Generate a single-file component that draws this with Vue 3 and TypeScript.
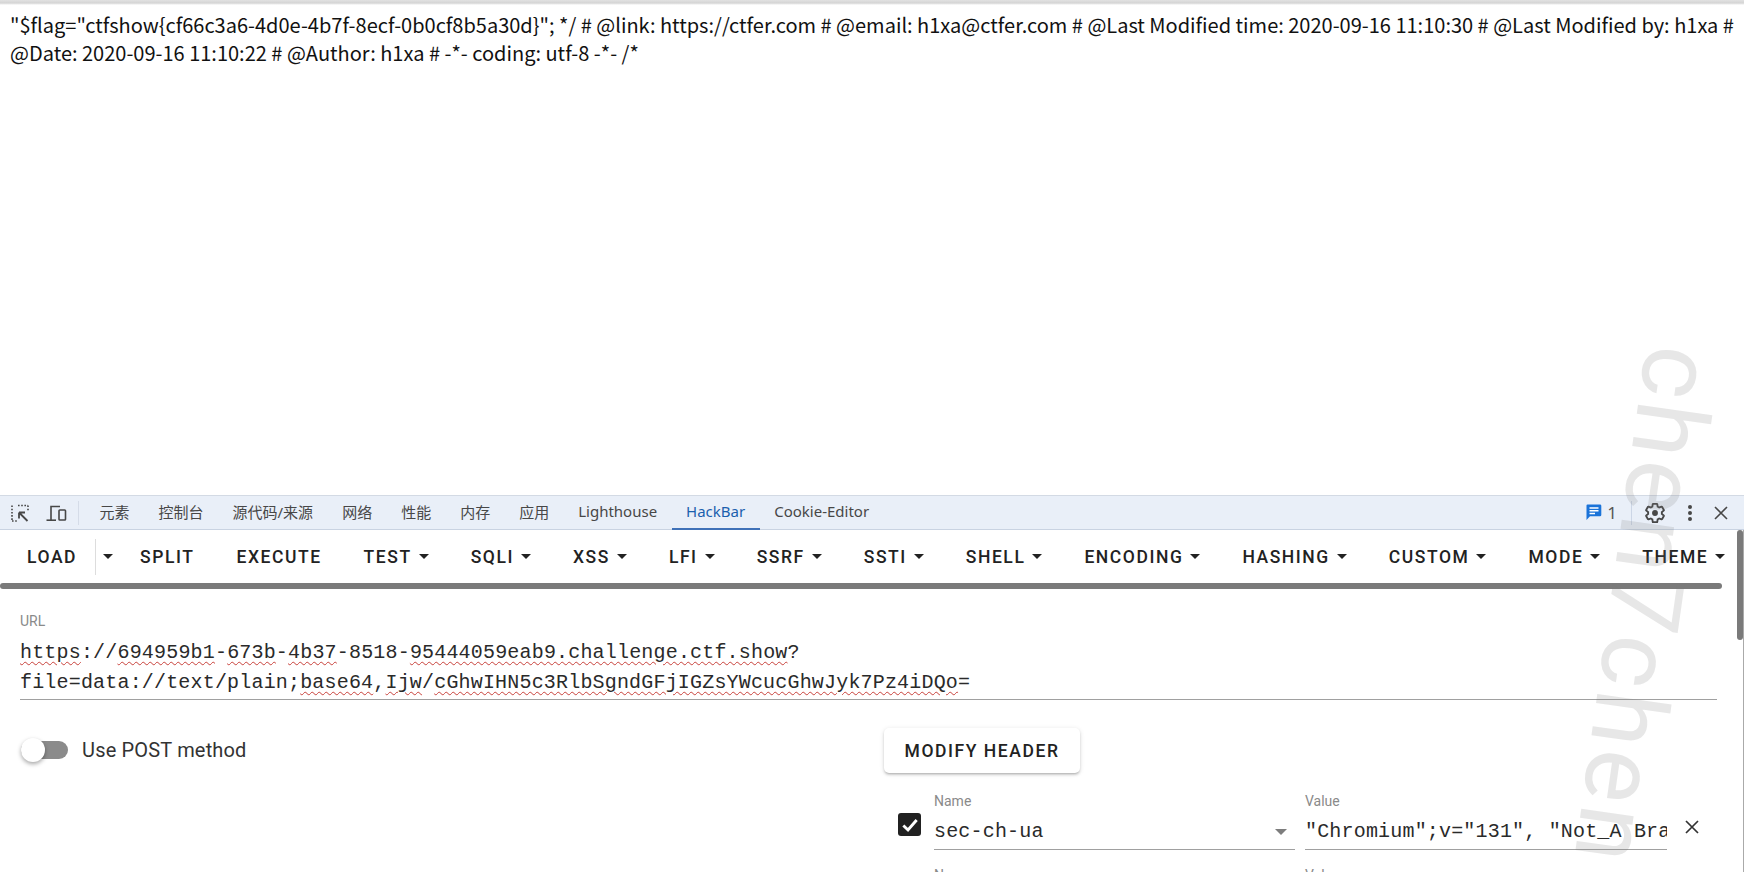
<script setup lang="ts">
interface Seg { t: string; bad?: boolean }
const tabs: string[] = ['元素', '控制台', '源代码/来源', '网络', '性能', '内存', '应用', 'Lighthouse', 'HackBar', 'Cookie-Editor']
const tools: { label: string; caret: boolean }[] = [
  { label: 'SPLIT', caret: false }, { label: 'EXECUTE', caret: false }, { label: 'TEST', caret: true },
  { label: 'SQLI', caret: true }, { label: 'XSS', caret: true }, { label: 'LFI', caret: true },
  { label: 'SSRF', caret: true }, { label: 'SSTI', caret: true }, { label: 'SHELL', caret: true },
  { label: 'ENCODING', caret: true }, { label: 'HASHING', caret: true }, { label: 'CUSTOM', caret: true },
  { label: 'MODE', caret: true }, { label: 'THEME', caret: true },
]
const line1: Seg[] = [
  { t: 'https', bad: true }, { t: '://' }, { t: '694959b1', bad: true }, { t: '-' }, { t: '673b', bad: true }, { t: '-' },
  { t: '4b37', bad: true }, { t: '-8518-' }, { t: '95444059eab9.challenge.ctf.show', bad: true }, { t: '?' },
]
const line2: Seg[] = [
  { t: 'file=data://text/plain;' }, { t: 'base64', bad: true }, { t: ',' }, { t: 'Ijw', bad: true }, { t: '/' },
  { t: 'cGhwIHN5c3RlbSgndGFjIGZsYWcucGhwJyk7Pz4iDQo', bad: true }, { t: '=' },
]
const value = '"Chromium";v="131", "Not_A Brand";v="24"'
</script>

<template>
  <div class="page">
    <div class="doc">
      "$flag="ctfshow{cf66c3a6-4d0e-4b7f-8ecf-0b0cf8b5a30d}"; */ # @link: https://ctfer.com # @email: h1xa@ctfer.com # @Last Modified time: 2020-09-16 11:10:30 # @Last Modified by: h1xa # @Date: 2020-09-16 11:10:22 # @Author: h1xa # -*- coding: utf-8 -*- /*
    </div>

    <div class="devbar">
      <svg class="ic-inspect" width="20" height="20" viewBox="0 0 20 20" fill="none">
        <path d="M8 2.5H18M2 2.5V18M2 18H7M18 2.5V8" stroke="#474747" stroke-width="1.6" stroke-dasharray="1.6 1.6" />
        <path d="M9 9.5H15M9 9.5V15.5M9.5 10L17.5 18" stroke="#474747" stroke-width="1.8" />
      </svg>
      <svg class="ic-device" width="21" height="20" viewBox="0 0 21 20" fill="none" stroke="#474747" stroke-width="1.6">
        <path d="M5 17V3.5H14" />
        <path d="M0.5 17.2H10" />
        <rect x="13" y="7" width="6.5" height="10" rx="0.8" />
      </svg>
      <span class="vsep" />
      <nav class="tabs">
        <span v-for="t in tabs" :key="t" class="tab" :class="{ active: t === 'HackBar' }">{{ t }}</span>
      </nav>
      <div class="devright">
        <svg width="16" height="17" viewBox="0 0 16 17">
          <path d="M1.5 0.5H14a1.3 1.3 0 0 1 1.3 1.3V11a1.3 1.3 0 0 1-1.3 1.3H4L0.5 16V1.5a1 1 0 0 1 1-1Z" fill="#1a73d9" />
          <path d="M3.5 4H12.5M3.5 6.7H12.5M3.5 9.4H9" stroke="#fff" stroke-width="1.5" />
        </svg>
        <span class="count">1</span>
        <span class="vsep2" />
        <svg class="gear" width="22" height="22" viewBox="0 0 24 24" fill="none">
          <path d="M19.43 12.98c.04-.32.07-.64.07-.98s-.03-.66-.07-.98l2.11-1.65c.19-.15.24-.42.12-.64l-2-3.46c-.12-.22-.39-.3-.61-.22l-2.49 1c-.52-.4-1.08-.73-1.69-.98l-.38-2.65A.49.49 0 0 0 14 2h-4c-.25 0-.46.18-.49.42l-.38 2.65c-.61.25-1.17.59-1.69.98l-2.49-1c-.23-.09-.49 0-.61.22l-2 3.46c-.13.22-.07.49.12.64l2.11 1.65c-.04.32-.07.65-.07.98s.03.66.07.98l-2.11 1.65c-.19.15-.24.42-.12.64l2 3.46c.12.22.39.3.61.22l2.49-1c.52.4 1.08.73 1.69.98l.38 2.65c.03.24.24.42.49.42h4c.25 0 .46-.18.49-.42l.38-2.65c.61-.25 1.17-.59 1.69-.98l2.49 1c.23.09.49 0 .61-.22l2-3.46c.12-.22.07-.49-.12-.64l-2.11-1.65Z" stroke="#474747" stroke-width="2" />
          <circle cx="12" cy="12" r="3.2" fill="#474747" />
        </svg>
        <svg class="dots" width="6" height="18" viewBox="0 0 6 18" fill="#474747">
          <circle cx="3" cy="3" r="2" /><circle cx="3" cy="9" r="2" /><circle cx="3" cy="15" r="2" />
        </svg>
        <svg class="close" width="14" height="14" viewBox="0 0 14 14" fill="none" stroke="#474747" stroke-width="1.6">
          <path d="M1 1L13 13M13 1L1 13" />
        </svg>
      </div>
    </div>

    <section class="hackbar">
      <div class="toolbar">
        <span class="btn load">LOAD</span>
        <span class="loadcaret"><i class="caret" /></span>
        <span v-for="b in tools" :key="b.label" class="btn">
          {{ b.label }}<i v-if="b.caret" class="caret after" />
        </span>
      </div>
      <div class="hscroll" />

      <div class="content">
        <div class="field">
          <div class="label">URL</div>
          <div class="mono urlbox">
            <div><span v-for="(s, i) in line1" :key="i" :class="{ bad: s.bad }">{{ s.t }}</span></div>
            <div><span v-for="(s, i) in line2" :key="i" :class="{ bad: s.bad }">{{ s.t }}</span></div>
          </div>
        </div>

        <div class="columns">
          <div class="left">
            <span class="switch"><span class="thumb" /></span>
            <span class="switch-label">Use POST method</span>
          </div>
          <div class="right">
            <button class="modify">MODIFY HEADER</button>
            <div class="hrow">
              <span class="check">
                <svg width="20" height="20" viewBox="0 0 18 18" fill="none" stroke="#fff" stroke-width="2.6">
                  <path d="M3 9.5L7.2 13.5L15 4.5" />
                </svg>
              </span>
              <div class="cell name">
                <div class="label">Name</div>
                <div class="mono inp">sec-ch-ua<i class="caret grey" /></div>
              </div>
              <div class="cell val">
                <div class="label">Value</div>
                <div class="mono inp clip">{{ value }}</div>
              </div>
              <svg class="rm" width="14" height="14" viewBox="0 0 14 14" fill="none" stroke="#333" stroke-width="1.7">
                <path d="M1 1L13 13M13 1L1 13" />
              </svg>
            </div>
            <div class="hrow">
              <span class="check hidden" />
              <div class="cell name"><div class="label">Name</div></div>
              <div class="cell val"><div class="label">Value</div></div>
            </div>
          </div>
        </div>
      </div>
      <div class="vscroll" />
    </section>

    <span class="mark">chen7chen</span>
  </div>
</template>

<style scoped>
.page {
  position: relative;
  width: 1744px;
  height: 872px;
  overflow: hidden;
  background: #fff;
  display: flex;
  flex-direction: column;
  font-family: Roboto, sans-serif;
}
.doc {
  height: 495px;
  flex: none;
  box-sizing: border-box;
  padding: 11px 10px 0;
  font: 20px/28px "Noto Sans CJK SC", sans-serif;
  color: #111;
  background: linear-gradient(#e2e2e2, #d4d4d4 3px, #fff 5px);
}
.devbar {
  height: 35px;
  flex: none;
  box-sizing: border-box;
  display: flex;
  align-items: center;
  background: #e9eff8;
  border-top: 1px solid #d3dae4;
  border-bottom: 1px solid #c9d3e2;
  color: #474747;
  font: 15px "Noto Sans", "Noto Sans CJK SC", sans-serif;
}
.ic-inspect { margin-left: 10px; }
.ic-device { margin-left: 16px; }
.vsep { width: 1px; height: 24px; background: #d5dce8; margin-left: 11px; }
.tabs { display: flex; height: 100%; margin-left: 6px; }
.tab {
  display: flex;
  align-items: center;
  padding: 0 14.5px 3px;
  position: relative;
  white-space: nowrap;
}
.tab.active { color: #1b5fae; }
.tab.active::after {
  content: "";
  position: absolute;
  left: 0;
  right: 0;
  bottom: -1px;
  height: 2px;
  background: #3f71b8;
}
.devright { margin-left: auto; display: flex; align-items: center; padding-right: 16px; }
.count { margin-left: 5px; font-size: 17px; color: #555; }
.vsep2 { width: 1px; height: 24px; background: #ccd6e6; margin-left: 14px; }
.gear { margin-left: 12px; }
.dots { margin-left: 21px; }
.close { margin-left: 21px; }

.hackbar {
  position: relative;
  flex: 1;
  min-height: 0;
  overflow: hidden;
  border-right: 1px solid #aaa;
}
.toolbar {
  height: 53px;
  display: flex;
  align-items: center;
  padding-left: 27px;
  gap: 42px;
  white-space: nowrap;
}
.btn {
  font-size: 17.5px;
  font-weight: 500;
  letter-spacing: 1.56px;
  color: #222;
  display: flex;
  align-items: center;
}
.load { position: relative; }
.loadcaret {
  display: flex;
  align-items: center;
  height: 36px;
  border-left: 1px solid #ddd;
  padding-left: 7px;
  margin-left: -24px;
  margin-right: -15px;
}
.caret {
  display: inline-block;
  width: 0;
  height: 0;
  border-left: 5px solid transparent;
  border-right: 5px solid transparent;
  border-top: 5px solid #222;
}
.caret.after { margin-left: 7px; }
.hscroll {
  width: 1722px;
  height: 6px;
  border-radius: 3px;
  background: #7a7a7a;
}
.vscroll {
  position: absolute;
  right: 0;
  top: 0;
  width: 6px;
  height: 110px;
  border-radius: 3px;
  background: #7a7a7a;
}
.content { padding: 0 26px 0 20px; }
.field { padding-top: 23px; }
.label { font-size: 14px; line-height: 18px; color: #8a8a8a; }
.mono {
  font-family: "Liberation Mono", monospace;
  font-size: 20px;
  letter-spacing: 0.18px;
  color: #2a2a2a;
}
.urlbox {
  margin-top: 8px;
  line-height: 30px;
  padding-bottom: 1px;
  border-bottom: 1px solid #a0a0a0;
  height: 60px;
}
.bad { text-decoration: underline wavy #c8413b 1px; text-underline-offset: 3px; }
.columns { display: flex; margin-top: 28px; }
.left {
  width: 864px;
  flex: none;
  display: flex;
  align-items: center;
  height: 44px;
}
.switch {
  position: relative;
  width: 47px;
  height: 18px;
  border-radius: 9px;
  background: #8b8b8b;
  margin-left: 1px;
}
.thumb {
  position: absolute;
  left: 0;
  top: -3px;
  width: 24px;
  height: 24px;
  border-radius: 50%;
  background: #fff;
  box-shadow: 0 2px 4px rgba(0, 0, 0, .35);
}
.switch-label { margin-left: 14px; font-size: 20px; letter-spacing: 0.17px; color: #333; }
.right { flex: 1; min-width: 0; }
.modify {
  display: block;
  width: 196px;
  height: 45px;
  padding: 1px 0 0;
  border: 0;
  border-radius: 5px;
  background: #fff;
  box-shadow: 0 2px 3px -1px rgba(0, 0, 0, .3), 0 1px 5px rgba(0, 0, 0, .12);
  font: 500 17.5px Roboto, sans-serif;
  letter-spacing: 1.56px;
  color: #222;
}
.hrow {
  display: flex;
  margin-top: 19px;
  padding-left: 14px;
  align-items: flex-start;
  height: 56px;
}
.hrow + .hrow { margin-top: 18px; }
.check {
  width: 23px;
  height: 23px;
  margin-top: 21px;
  margin-right: 13px;
  border-radius: 3px;
  background: #212121;
  display: flex;
  align-items: center;
  justify-content: center;
  flex: none;
}
.check.hidden { background: none; }
.cell { flex: none; position: relative; }
.name { width: 361px; margin-right: 10px; }
.val { width: 362px; }
.inp {
  margin-top: 2px;
  height: 38px;
  padding-top: 3px;
  line-height: 34px;
  box-sizing: border-box;
  border-bottom: 1px solid #a0a0a0;
  display: flex;
  justify-content: space-between;
  align-items: center;
}
.caret.grey { border-top-color: #7d7d7d; border-left-width: 6px; border-right-width: 6px; border-top-width: 6px; margin-right: 8px; }
.clip { display: block; overflow: hidden; white-space: nowrap; }
.rm { margin: 28px 0 0 18px; }

.mark {
  position: absolute;
  left: 1730px;
  top: 354px;
  transform-origin: 0 0;
  transform: rotate(98deg);
  font: 400 100px/1 Roboto, sans-serif;
  letter-spacing: 4px;
  color: rgba(120, 120, 120, .18);
  white-space: nowrap;
  pointer-events: none;
}
</style>
